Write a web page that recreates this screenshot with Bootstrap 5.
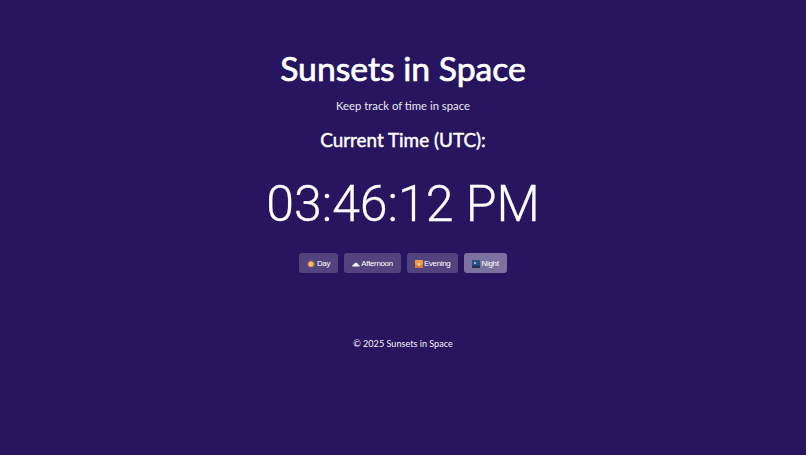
<!DOCTYPE html>
<html lang="en">
<head>
<meta charset="utf-8">
<title>Sunsets in Space</title>
<link href="https://cdn.jsdelivr.net/npm/bootstrap@5.3.0/dist/css/bootstrap.min.css" rel="stylesheet">
<style>
html,body{height:455px;overflow:hidden}
body{background:#27155f;color:#fff;font-family:"Lato","Open Sans",sans-serif}
.page-wrap{padding-top:46px}
.app-title{font-size:33.7px;font-weight:400;-webkit-text-stroke:.7px #fff;line-height:44px;margin:0}
.app-sub{font-size:11.3px;line-height:16px;margin:8px 0 0;opacity:.9}
.time-label{font-size:18.9px;font-weight:400;-webkit-text-stroke:.45px #fff;line-height:26px;margin:13px 0 0}
.time-big{font-family:Roboto,sans-serif;font-size:50px;font-weight:300;-webkit-text-stroke:.3px #fff;line-height:72px;margin:15px 0 0}
.mode-row{margin-top:13px;gap:5.7px}
.mode-btn{background:rgba(255,255,255,.2);border:0;border-radius:3px;color:#fff;font:400 7.9px/20px "Liberation Sans",Arial,sans-serif;letter-spacing:-.3px;padding:1px 8px 0;height:20px;display:flex;align-items:center;gap:1.5px}
.mode-btn.is-on{background:rgba(255,255,255,.4)}
.mode-ico{display:block;width:8px;height:8px;flex:none}
.foot-note{font-size:9.1px;line-height:14px;margin:64px 0 0;opacity:.95}
</style>
</head>
<body>
<div class="page-wrap text-center">
<h1 class="app-title">Sunsets in Space</h1>
<p class="app-sub">Keep track of time in space</p>
<h2 class="time-label">Current Time (UTC):</h2>
<div class="time-big">03:46:12 PM</div>
<div class="mode-row d-flex justify-content-center">
<button class="mode-btn"><svg class="mode-ico" viewBox="0 0 8 8"><circle cx="4" cy="4" r="2.6" fill="#f7c04a"/><circle cx="4" cy="4" r="3.6" fill="#f7c04a" opacity=".3"/></svg>Day</button>
<button class="mode-btn"><svg class="mode-ico" viewBox="0 0 8 8"><path d="M.4 6.4C.1 5.4.8 4.6 1.7 4.6 2 3.2 3.2 2.4 4.4 2.7c1 .2 1.6 1 1.7 1.9.9 0 1.6.8 1.5 1.8z" fill="#f4f4f6"/></svg>Afternoon</button>
<button class="mode-btn"><svg class="mode-ico" viewBox="0 0 8 8"><rect width="8" height="8" rx=".6" fill="#f29a4a"/><rect y="4.6" width="8" height="3.4" fill="#d9743a"/><circle cx="4" cy="4.4" r="1.5" fill="#ffd97a"/></svg>Evening</button>
<button class="mode-btn is-on"><svg class="mode-ico" viewBox="0 0 8 8"><rect width="8" height="8" rx=".6" fill="#24517d"/><rect y="5.6" width="8" height="2.4" fill="#1c3350"/><circle cx="3" cy="3" r=".9" fill="#dfe8f5"/></svg>Night</button>
</div>
<p class="foot-note">© 2025 Sunsets in Space</p>
</div>
<script src="https://cdn.jsdelivr.net/npm/bootstrap@5.3.0/dist/js/bootstrap.bundle.min.js"></script>
</body>
</html>
